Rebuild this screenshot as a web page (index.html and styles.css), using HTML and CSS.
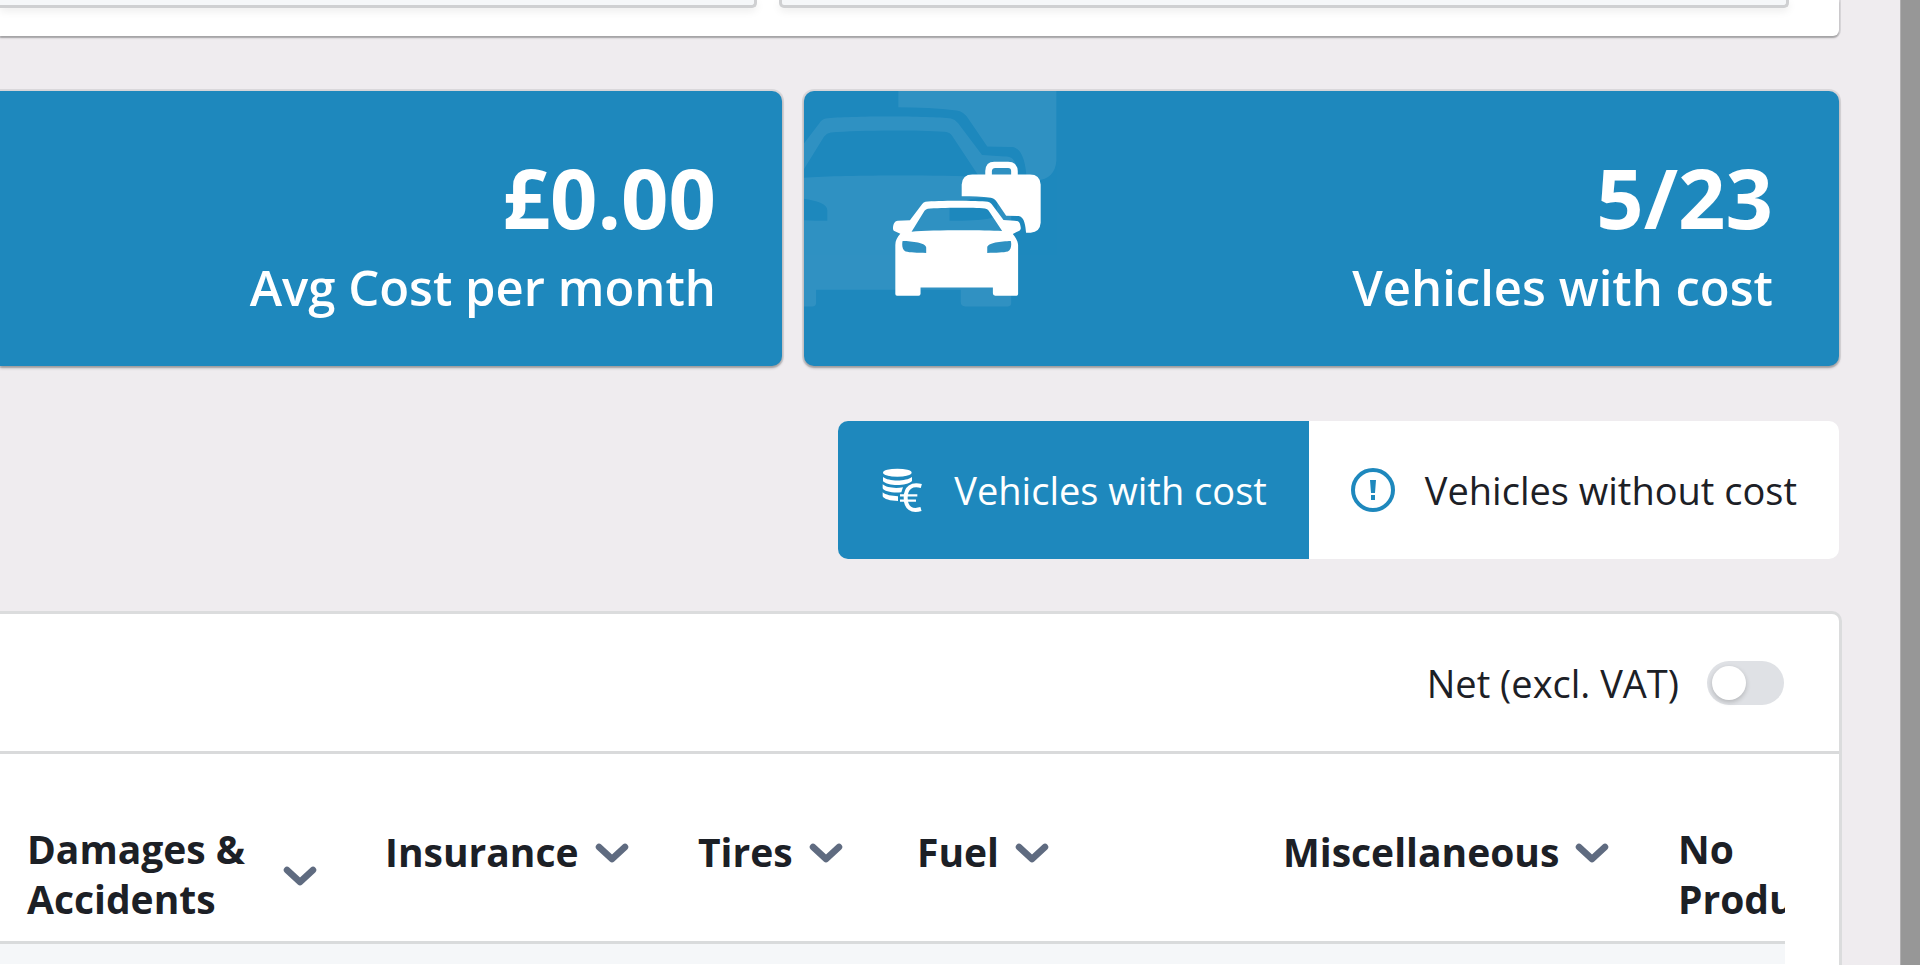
FILE: index.html
```html
<!DOCTYPE html>
<html lang="en">
<head>
<meta charset="utf-8">
<title>Vehicle costs</title>
<link rel="stylesheet" href="styles.css">
</head>
<body>
<svg class="sprite" aria-hidden="true">
  <symbol id="car-case" viewBox="337 273 446 405">
    <path fill-rule="evenodd" d="M388 451 L352 452 C340 453 337 465 337 476 Q337 481 341 483 L359 491 C350 500 344 512 344 525 V673 Q344 678 349 678 H414 Q420 678 420 672 V653 H638 V671 Q638 678 645 678 H709 Q714 678 714 673 V525 C713 512 706 502 698 492 L718 482 Q723 479 722 473 C720 455 715 452 703 452 L670 450 L634 402 Q629 396 623 395 C590 391 470 391 435 395 Q429 396 425 402 Z M393 485 L432 422 Q436 417 442 416 C480 412 575 412 614 415 Q622 416 625 421 L666 483 C600 480 450 480 393 485 Z M366 513 C395 514 437 518 437 533 V549 C410 549 388 548 375 545 C363 540 364 520 366 513 Z M692 513 C663 514 621 518 621 533 V549 C648 549 670 548 683 545 C695 540 694 520 692 513 Z"/>
    <path fill-rule="evenodd" d="M544 378 V343 Q546 313 576 313 H615 V302 Q616 274 642 274 H684 Q711 274 713 302 V313 H750 Q780 313 782 343 V458 Q780 486 752 488 H738 C736 470 734 441 716 438 L678 437 L650 396 Q642 384 632 383 C605 379 575 378 544 378 Z M635 313 V302 Q636 293 645 293 H684 Q693 293 693 302 V313 Z"/>
  </symbol>
  <symbol id="chevron" viewBox="0 0 55 55">
    <path d="M14 23 L27 35 L40 23" fill="none" stroke="currentColor" stroke-width="6.5" stroke-linecap="round" stroke-linejoin="round"/>
  </symbol>
</svg>

<main class="page">
  <section class="filters">
    <div class="field"></div>
    <div class="field"></div>
  </section>

  <section class="cards">
    <article class="card">
      <div class="card-text">
        <strong class="card-value">£0.00</strong>
        <span class="card-label">Avg Cost per month</span>
      </div>
    </article>
    <article class="card">
      <svg class="card-watermark" aria-hidden="true"><use href="#car-case"/></svg>
      <svg class="card-icon" aria-hidden="true"><use href="#car-case"/></svg>
      <div class="card-text">
        <strong class="card-value">5/23</strong>
        <span class="card-label">Vehicles with cost</span>
      </div>
    </article>
  </section>

  <div class="tabs">
    <button type="button" class="tab tab-active">
      <svg class="tab-icon" viewBox="174 203 132 132" aria-hidden="true">
        <g fill="currentColor">
          <ellipse cx="226" cy="217" rx="43" ry="12"/>
          <path d="M183 230 C200 244 252 244 270 230 V242 C255 258 197 258 183 243 Z"/>
          <path d="M182 252 C192 262 220 265 243 261 L238 276 C212 279 186 273 182 264 Z"/>
          <path d="M182 276 C190 284 210 287 228 288 V302 C205 302 185 296 182 288 Z"/>
        </g>
        <g fill="none" stroke="currentColor">
          <path stroke-width="12" d="M298 257 C270 249 251 262 251 292 C251 324 270 334 297 326"/>
          <path stroke-width="7" d="M234 285 H286 M234 301 H282"/>
        </g>
      </svg>
      Vehicles with cost
    </button>
    <button type="button" class="tab">
      <svg class="tab-icon" viewBox="0 0 44 44" aria-hidden="true">
        <circle cx="22" cy="22" r="20" fill="none" stroke="currentColor" stroke-width="4"/>
        <path fill="currentColor" d="M19 12 H25 L24 25 H20 Z M20 27 H24 V32 H20 Z"/>
      </svg>
      Vehicles without cost
    </button>
  </div>

  <section class="panel">
    <header class="panel-head">
      <label for="net">Net (excl. VAT)</label>
      <input class="switch" type="checkbox" role="switch" id="net">
    </header>
    <div class="panel-body">
      <div class="table-clip">
        <table class="costs">
          <colgroup>
            <col class="c-damages"><col class="c-insurance"><col class="c-tires">
            <col class="c-fuel"><col class="c-misc"><col class="c-product">
          </colgroup>
          <thead>
            <tr>
              <th scope="col"><div class="th"><span class="th-wrap">Damages &amp; Accidents</span><svg class="sort"><use href="#chevron"/></svg></div></th>
              <th scope="col"><div class="th">Insurance<svg class="sort"><use href="#chevron"/></svg></div></th>
              <th scope="col"><div class="th">Tires<svg class="sort"><use href="#chevron"/></svg></div></th>
              <th scope="col"><div class="th">Fuel<svg class="sort"><use href="#chevron"/></svg></div></th>
              <th scope="col"><div class="th">Miscellaneous<svg class="sort"><use href="#chevron"/></svg></div></th>
              <th scope="col"><div class="th">No Product</div></th>
            </tr>
          </thead>
          <tbody>
            <tr><td></td><td></td><td></td><td></td><td></td><td></td></tr>
          </tbody>
        </table>
      </div>
    </div>
  </section>
</main>
<div class="scrollbar"></div>
</body>
</html>
```
FILE: styles.css
```css
* { box-sizing: border-box; }

body {
  margin: 0;
  height: 100vh;
  display: flex;
  overflow: hidden;
  background: #efecef;
  color: #1c2026;
  font-family: "Open Sans", "Noto Sans", sans-serif;
  font-size: 38px;
  line-height: 50px;
}

.sprite { position: absolute; width: 0; height: 0; }

.page {
  flex: 1;
  min-width: 0;
  padding-right: 61px;
  display: flex;
  flex-direction: column;
}

.scrollbar {
  width: 20px;
  background: #979797;
  border-left: 1px solid #b0afb0;
}

.filters {
  display: grid;
  grid-template-columns: 757fr 1010fr;
  gap: 22px;
  padding: 0 50px 28px 0;
  background: #fff;
  border-radius: 0 0 6px 0;
  box-shadow: 0 2px 2px rgba(0, 0, 0, .25), 0 0 0 2px #dad8db;
}

.field {
  height: 8px;
  background: #f5f7f9;
  border: 3px solid #cfd0d2;
  border-top: 0;
  border-radius: 0 0 5px 5px;
  box-shadow: 0 3px 8px rgba(0, 0, 0, .08);
}
.field:first-child { border-left: 0; border-radius: 0 0 5px 0; }

.cards {
  display: grid;
  grid-template-columns: 782fr 1035fr;
  gap: 22px;
  margin-top: 55px;
}

.card {
  position: relative;
  display: flex;
  align-items: flex-start;
  padding: 50px 66px 45px 89px;
  overflow: hidden;
  background: #1e88bd;
  color: #fff;
  border-radius: 10px;
  box-shadow: 0 2px 3px rgba(0, 0, 0, .3), 0 0 0 2px #dad8db;
}
.card:first-child { border-radius: 0 10px 10px 0; }

.card-text {
  flex: 1;
  display: flex;
  flex-direction: column;
  align-items: flex-end;
}
.card-value { font-size: 83px; line-height: 112px; font-weight: 700; }
.card-label { font-size: 49px; line-height: 68px; font-weight: 600; }

.card-icon {
  width: 148px;
  height: 135px;
  margin-top: 20px;
  fill: #fff;
}

.card-watermark {
  position: absolute;
  left: -43px;
  top: -54px;
  width: 296px;
  height: 270px;
  fill: #fff;
  opacity: .08;
}

.tabs {
  display: flex;
  justify-content: flex-end;
  margin-top: 55px;
}

.tab {
  display: flex;
  align-items: center;
  gap: 30px;
  height: 138px;
  padding: 0 42px;
  border: 0;
  border-radius: 0 10px 10px 0;
  background: #fff;
  color: inherit;
  font: inherit;
}
.tab-icon { width: 44px; height: 44px; color: #1e88bd; }
.tab-active {
  background: #1e88bd;
  color: #fff;
  border-radius: 10px 0 0 10px;
}
.tab-active .tab-icon { color: #fff; }

.panel {
  flex: 1 0 auto;
  margin-top: 55px;
  background: #fff;
  border-radius: 0 7px 0 0;
  box-shadow: 0 0 0 3px #dbdcdd;
}

.panel-head {
  display: flex;
  align-items: center;
  justify-content: flex-end;
  gap: 28px;
  height: 140px;
  padding-right: 55px;
  border-bottom: 3px solid #d9dadb;
}

.switch {
  appearance: none;
  width: 77px;
  height: 44px;
  margin: 0;
  padding: 5px;
  border-radius: 22px;
  background: #dfe1e5;
}
.switch::before {
  content: "";
  display: block;
  width: 34px;
  height: 34px;
  border-radius: 50%;
  background: #fff;
  box-shadow: 0 2px 5px rgba(0, 0, 0, .2);
}

.panel-body { padding: 54px 54px 0 0; }
.table-clip { overflow: hidden; }

.costs {
  width: 1860px;
  table-layout: fixed;
  border-collapse: collapse;
}
.c-damages { width: 354px; }
.c-insurance { width: 313px; }
.c-tires { width: 219px; }
.c-fuel { width: 366px; }
.c-misc { width: 395px; }

.costs th {
  padding: 16px 0 17px 31px;
  text-align: left;
  vertical-align: top;
  font-size: 39px;
  font-weight: 700;
  border-bottom: 3px solid #d9dbdc;
}
.costs th:first-child { padding-left: 27px; }

.th { display: flex; align-items: center; gap: 6px; }
.th-wrap { width: 240px; }
.sort { width: 55px; height: 55px; color: #5f6b80; }

.costs td { height: 21px; padding: 0; background: #f5f7f9; }
```
